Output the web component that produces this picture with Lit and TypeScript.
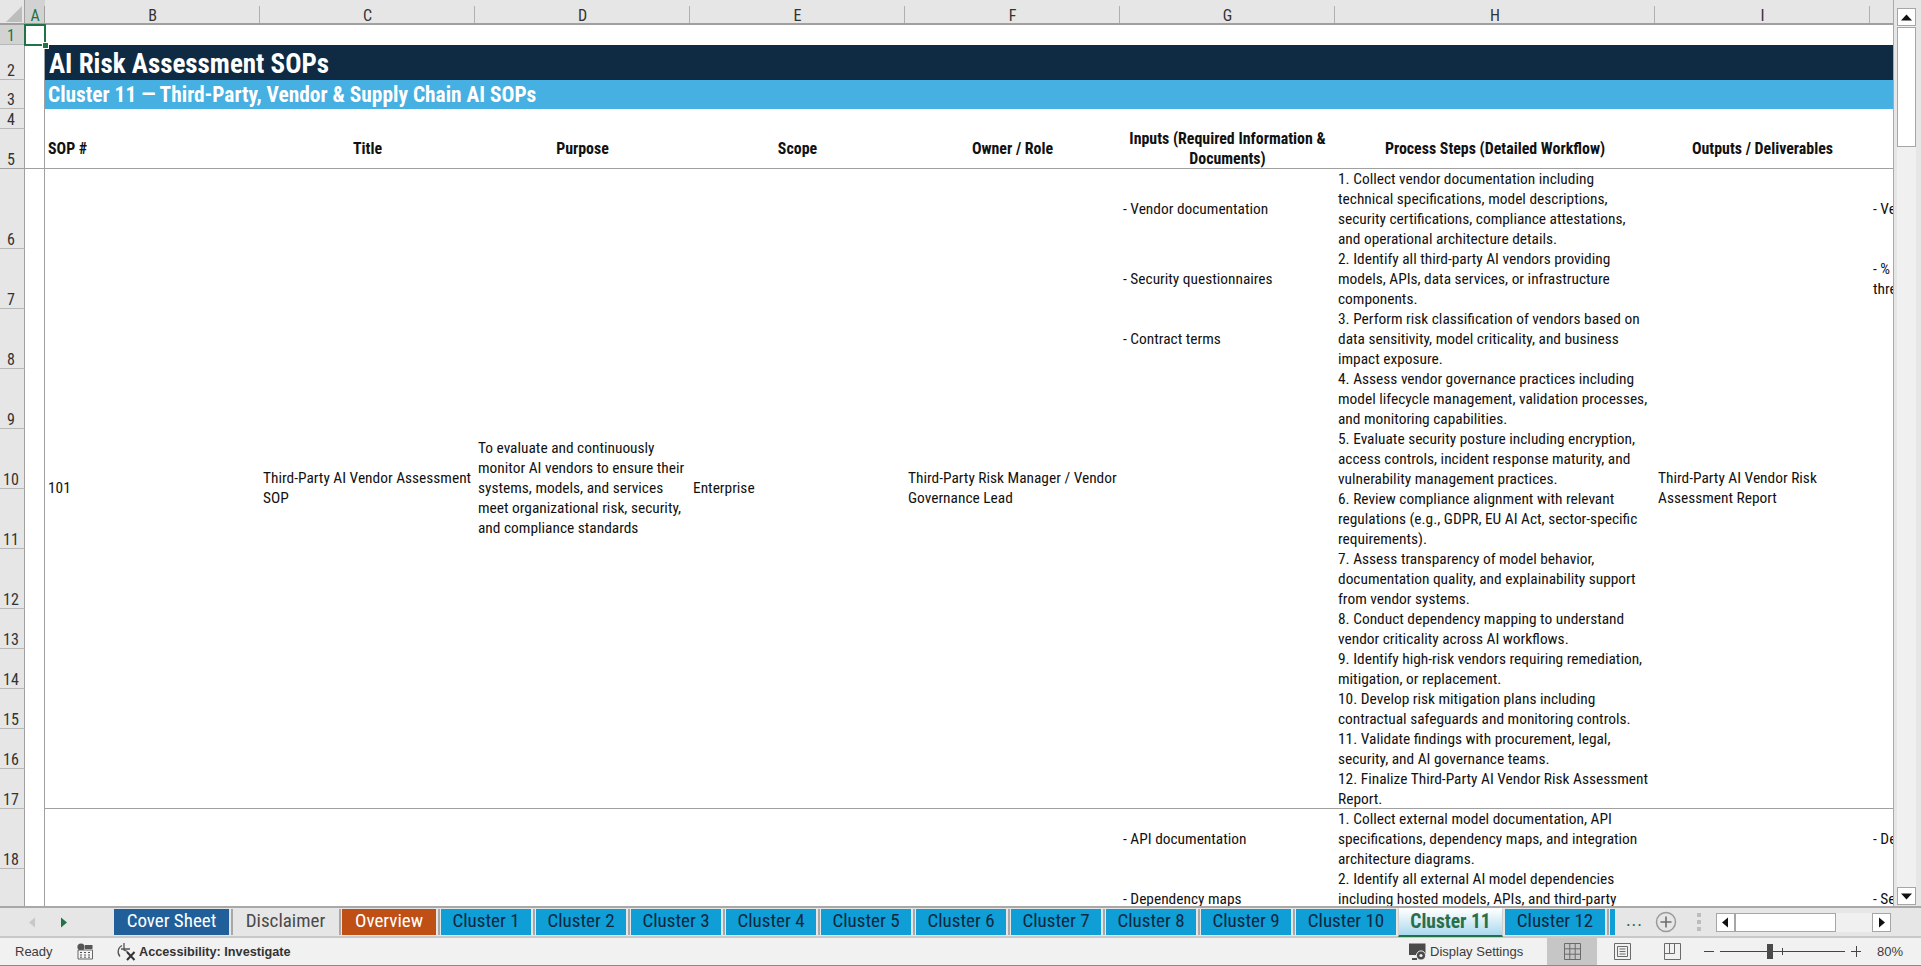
import { LitElement, html, css } from "lit";
import { customElement } from "lit/decorators.js";

const COLS = ["A", "B", "C", "D", "E", "F", "G", "H", "I", "J"];
const COL_W = [20, 215, 215, 215, 215, 215, 215, 320, 215, 215];
const ROW_H = [20, 35, 29, 20, 40, 80, 60, 60, 60, 60, 60, 60, 40, 40, 40, 40, 40, 60, 60];

const STEPS: string[] = [
  "1. Collect vendor documentation including\ntechnical specifications, model descriptions,\nsecurity certifications, compliance attestations,\nand operational architecture details.",
  "2. Identify all third-party AI vendors providing\nmodels, APIs, data services, or infrastructure\ncomponents.",
  "3. Perform risk classification of vendors based on\ndata sensitivity, model criticality, and business\nimpact exposure.",
  "4. Assess vendor governance practices including\nmodel lifecycle management, validation processes,\nand monitoring capabilities.",
  "5. Evaluate security posture including encryption,\naccess controls, incident response maturity, and\nvulnerability management practices.",
  "6. Review compliance alignment with relevant\nregulations (e.g., GDPR, EU AI Act, sector-specific\nrequirements).",
  "7. Assess transparency of model behavior,\ndocumentation quality, and explainability support\nfrom vendor systems.",
  "8. Conduct dependency mapping to understand\nvendor criticality across AI workflows.",
  "9. Identify high-risk vendors requiring remediation,\nmitigation, or replacement.",
  "10. Develop risk mitigation plans including\ncontractual safeguards and monitoring controls.",
  "11. Validate findings with procurement, legal,\nsecurity, and AI governance teams.",
  "12. Finalize Third-Party AI Vendor Risk Assessment\nReport.",
  "1. Collect external model documentation, API\nspecifications, dependency maps, and integration\narchitecture diagrams.",
  "2. Identify all external AI model dependencies\nincluding hosted models, APIs, and third-party\nservices.",
];
const INPUTS: Record<number, string> = {
  6: "- Vendor documentation",
  7: "- Security questionnaires",
  8: "- Contract terms",
  18: "- API documentation",
  19: "- Dependency maps",
};
const OUTS: Record<number, string> = {
  6: "- Vendor risk score",
  7: "- % of vendors above risk\nthreshold",
  18: "- Dependency register",
  19: "- Service risk summary",
};
const HEADS = [
  { c: 2, t: "SOP #", left: true },
  { c: 3, t: "Title" },
  { c: 4, t: "Purpose" },
  { c: 5, t: "Scope" },
  { c: 6, t: "Owner / Role" },
  { c: 7, t: "Inputs (Required Information &\nDocuments)" },
  { c: 8, t: "Process Steps (Detailed Workflow)" },
  { c: 9, t: "Outputs / Deliverables" },
  { c: 10, t: "" },
];
const MERGED = [
  { c: 2, t: "101" },
  { c: 3, t: "Third-Party AI Vendor Assessment\nSOP" },
  { c: 4, t: "To evaluate and continuously\nmonitor AI vendors to ensure their\nsystems, models, and services\nmeet organizational risk, security,\nand compliance standards" },
  { c: 5, t: "Enterprise" },
  { c: 6, t: "Third-Party Risk Manager / Vendor\nGovernance Lead" },
  { c: 9, t: "Third-Party AI Vendor Risk\nAssessment Report" },
];
const TABS = [
  { t: "Cover Sheet", w: 115, k: "navy" },
  { t: "Disclaimer", w: 103, k: "plain" },
  { t: "Overview", w: 94, k: "rust" },
  ...[1, 2, 3, 4, 5, 6, 7, 8, 9].map((n) => ({ t: `Cluster ${n}`, w: 90, k: "blue" })),
  { t: "Cluster 10", w: 100, k: "blue" },
  { t: "Cluster 11", w: 105, k: "active" },
  { t: "Cluster 12", w: 100, k: "blue" },
  { t: "", w: 5, k: "blue" },
];

const place = (col: number, row: number, span = 1) =>
  `grid-column:${col};grid-row:${row} / span ${span}`;

@customElement("app-root")
export class AppRoot extends LitElement {
  static styles = css`
    :host {
      display: block;
      width: 1921px;
      height: 966px;
      overflow: hidden;
      background: #e6e6e6;
      font-family: "Roboto Condensed", "Roboto", sans-serif;
      font-stretch: 75%;
      color: #111;
    }
    .app { display: flex; flex-direction: column; height: 966px; }
    .top { display: flex; height: 906px; flex: none; }
    .sheet {
      position: relative;
      width: 1894px;
      flex: none;
      box-sizing: border-box;
      overflow: hidden;
      background: #fff;
      border-right: 1px solid #a9a9a9;
      display: grid;
      align-content: start;
      justify-content: start;
      font-size: 15.4px;
      line-height: 20px;
    }
    .corner { background: #e6e6e6; border-right: 1px solid #a0a0a0; border-bottom: 2px solid #a0a0a0; box-sizing: border-box; display: flex; align-items: center; justify-content: center; }
    .col {
      background: #e6e6e6;
      box-sizing: border-box;
      border-bottom: 2px solid #a0a0a0;
      font-size: 16px;
      line-height: 16px;
      color: #333;
      display: flex;
      align-items: flex-start;
      justify-content: center;
      position: relative;
      padding-top: 8px;
    }
    .col::after { content: ""; position: absolute; right: 0; top: 6px; bottom: 0; width: 1px; background: #b0b0b0; }
    .col.sel { background: #d2d2d2; color: #217346; }
    .col.sel::after { background: #a0a0a0; top: 6px; }
    .rowh {
      background: #e6e6e6;
      box-sizing: border-box;
      border-right: 1px solid #a0a0a0;
      border-bottom: 1px solid #b8b8b8;
      font-size: 16px;
      line-height: 16px;
      color: #333;
      display: flex;
      align-items: flex-end;
      justify-content: center;
      padding-right: 2px;
    }
    .rowh.sel { background: #d2d2d2; color: #217346; }
    .rowh.rule { border-bottom: 1px solid #a0a0a0; }
    .acol { box-sizing: border-box; border-right: 1px solid #a0a0a0; }
    .acol.rule { border-bottom: 1px solid #a0a0a0; }
    .banner { display: flex; align-items: center; padding-left: 4px; color: #fff; font-weight: 700; white-space: nowrap; }
    .banner.title { background: #0f2a43; font-size: 27px; padding-top: 3px; box-sizing: border-box; }
    .banner.sub { background: #45b0e1; font-size: 21.4px; padding-left: 3px; }
    .cell {
      box-sizing: border-box;
      padding: 0 3px;
      display: flex;
      align-items: center;
      white-space: pre;
      overflow: hidden;
    }
    .cell.rule { border-bottom: 1px solid #a0a0a0; }
    .cell.merged { padding-bottom: 2px; }
    .cell.head { font-weight: 700; font-size: 15.9px; justify-content: center; text-align: center; }
    .cell.head.left { justify-content: flex-start; text-align: left; }
    .selbox {
      position: absolute;
      left: 24px;
      top: 24px;
      width: 22px;
      height: 22px;
      box-sizing: border-box;
      border: 2px solid #217346;
    }
    .selbox::after {
      content: "";
      position: absolute;
      right: -4px;
      bottom: -4px;
      width: 5px;
      height: 5px;
      background: #217346;
      outline: 1px solid #fff;
    }
    .vscroll {
      flex: 1;
      background: #e6e6e6;
      display: flex;
      flex-direction: column;
      align-items: flex-start;
      padding: 8px 0 1px 3px;
      box-sizing: border-box;
    }
    .vtrack { width: 19px; flex: 1; background: #f0f0f0; display: flex; flex-direction: column; }
    .sbtn {
      width: 19px;
      height: 18px;
      flex: none;
      box-sizing: border-box;
      background: #fff;
      border: 1px solid #a6a6a6;
      display: flex;
      align-items: center;
      justify-content: center;
    }
    .vthumb { width: 19px; height: 120px; margin-top: 1px; box-sizing: border-box; background: #fff; border: 1px solid #a6a6a6; }
    .tabbar {
      height: 32px;
      flex: none;
      box-sizing: border-box;
      border-top: 2px solid #a8a8a8;
      border-bottom: 2px solid #c8c8c8;
      background: #e6e6e6;
      display: flex;
      align-items: flex-start;
      position: relative;
    }
    .nav { width: 114px; flex: none; height: 28px; display: flex; align-items: center; padding-left: 28px; box-sizing: border-box; gap: 22px; }
    .tabs { display: flex; width: 1503px; flex: none; padding-top: 1px; overflow: hidden; height: 30px; box-sizing: border-box; }
    .tab {
      height: 26px;
      flex: none;
      margin-right: 5px;
      padding-bottom: 2px;
      display: flex;
      align-items: center;
      justify-content: center;
      font-size: 19px;
      line-height: 20px;
      position: relative;
      box-sizing: border-box;
      white-space: nowrap;
    }
    .tab::after { content: ""; position: absolute; top: 0; right: -3.5px; width: 1.5px; height: 26px; background: #a8a8a8; }
    .tab.navy { background: #215f9a; color: #fff; }
    .tab.plain { color: #4a4a4a; }
    .tab.rust { background: #c04f15; color: #fff; }
    .tab.blue { background: #0f9ed5; color: #0e2841; }
    .tab.active {
      height: 29px;
      margin: -1px 2px 0 -3px;
      padding-bottom: 1px;
      background: linear-gradient(#ffffff, #a9d9ee);
      color: #2a6e4a;
      font-weight: 700;
      font-size: 19.5px;
      border: 1px solid #d0d0d0;
      border-top-color: #fff;
      border-bottom: 2px solid #217346;
      z-index: 1;
    }
    .tab.active::after { display: none; }
    .tab:last-child::after { display: none; }
    .more { width: 31px; flex: none; text-align: center; color: #217346; font-size: 18px; line-height: 24px; letter-spacing: 1px; margin-left: 2px; margin-right: 5px; }
    .plus { flex: none; width: 22px; height: 28px; display: flex; align-items: center; }
    .dots { flex: none; width: 4px; margin-left: 20px; height: 28px; display: flex; flex-direction: column; justify-content: center; gap: 3px; }
    .dots i { display: block; width: 4px; height: 4px; background: #bdbdbd; }
    .hscroll { position: absolute; left: 1716px; top: 5px; width: 175px; height: 19px; background: #f0f0f0; display: flex; }
    .hbtn { width: 19px; height: 19px; flex: none; box-sizing: border-box; background: #fff; border: 1px solid #a6a6a6; display: flex; align-items: center; justify-content: center; }
    .hthumb { width: 101px; height: 19px; flex: none; box-sizing: border-box; background: #fff; border: 1px solid #a6a6a6; }
    .hgap { flex: 1; }
    .status {
      flex: 1;
      background: #f1f1f1;
      border-bottom: 1px solid #8a8a8a;
      box-sizing: border-box;
      display: flex;
      align-items: center;
      font-family: "Liberation Sans", sans-serif;
      font-stretch: normal;
      font-size: 13px;
      color: #3c3c3c;
      white-space: nowrap;
    }
    .ready { margin-left: 15px; width: 62px; flex: none; }
    .st-ico { flex: none; display: block; }
    .acc-ico { margin-left: 23px; }
    .acc { font-weight: 700; font-size: 12.7px; margin-left: 3px; color: #333; }
    .spacer { flex: 1; }
    .disp { margin-left: 3px; width: 117px; flex: none; }
    .view { width: 50px; align-self: stretch; display: flex; align-items: center; justify-content: center; flex: none; }
    .view.on { background: #c6c6c6; }
    .zoom { flex: none; width: 157px; margin-left: 7px; position: relative; height: 100%; }
    .zline { position: absolute; left: 16px; top: 13px; width: 125px; height: 1px; background: #444; }
    .ztick { position: absolute; left: 78px; top: 10px; width: 1px; height: 7px; background: #444; }
    .zthumb { position: absolute; left: 63px; top: 6px; width: 6px; height: 15px; background: #4a4a4a; }
    .zm { position: absolute; left: 0; top: 13px; width: 10px; height: 1px; background: #444; }
    .zp { position: absolute; left: 147px; top: 13px; width: 10px; height: 1px; background: #444; }
    .zp::after { content: ""; position: absolute; left: 5px; top: -5px; width: 1px; height: 11px; background: #444; }
    .pct { margin-left: 16px; margin-right: 14px; width: 30px; flex: none; }
  `;

  private sheet() {
    const out: unknown[] = [];
    out.push(html`<div class="corner" style=${place(1, 1)}>
      <svg width="22" height="22" viewBox="0 0 22 22"><path d="M21 5V21H5Z" fill="#bdbdbd"/></svg>
    </div>`);
    COLS.forEach((c, i) => out.push(html`<div class="col ${i === 0 ? "sel" : ""}" style=${place(i + 2, 1)}>${c}</div>`));
    ROW_H.forEach((_, i) => {
      const n = i + 1;
      const rule = n === 5 ? "rule" : "";
      out.push(html`<div class="rowh ${n === 1 ? "sel" : ""} ${rule}" style=${place(1, n + 1)}>${n}</div>`);
      out.push(html`<div class="acol ${rule}" style=${place(2, n + 1)}></div>`);
    });
    out.push(html`<div class="banner title" style="grid-column:3 / 12;grid-row:3">AI Risk Assessment SOPs</div>`);
    out.push(html`<div class="banner sub" style="grid-column:3 / 12;grid-row:4">Cluster 11 — Third-Party, Vendor &amp; Supply Chain AI SOPs</div>`);
    HEADS.forEach((h) =>
      out.push(html`<div class="cell head rule ${h.left ? "left" : ""}" style=${place(h.c + 1, 6)}>${h.t}</div>`)
    );
    MERGED.forEach((m) => out.push(html`<div class="cell merged rule" style=${place(m.c + 1, 7, 12)}>${m.t}</div>`));
    for (let n = 6; n <= 19; n++) {
      const rule = n === 17 ? "rule" : "";
      out.push(html`<div class="cell ${rule}" style=${place(8, n + 1)}>${INPUTS[n] ?? ""}</div>`);
      out.push(html`<div class="cell ${rule}" style=${place(9, n + 1)}>${STEPS[n - 6]}</div>`);
      out.push(html`<div class="cell ${rule}" style=${place(11, n + 1)}>${OUTS[n] ?? ""}</div>`);
    }
    return out;
  }

  render() {
    const cols = `25px ${COL_W.map((w) => w + "px").join(" ")}`;
    const rows = `25px ${ROW_H.map((h) => h + "px").join(" ")}`;
    const tri = (d: string, f = "#111") => html`<svg width="9" height="11" viewBox="0 0 9 11"><path d=${d} fill=${f}/></svg>`;
    return html`<div class="app">
      <div class="top">
        <div class="sheet" style="grid-template-columns:${cols};grid-template-rows:${rows}">
          ${this.sheet()}
          <div class="selbox"></div>
        </div>
        <div class="vscroll">
          <div class="sbtn"><svg width="11" height="7" viewBox="0 0 11 7"><path d="M5.5 0.5L11 6.5H0Z" fill="#111"/></svg></div>
          <div class="vtrack"><div class="vthumb"></div></div>
          <div class="sbtn"><svg width="11" height="7" viewBox="0 0 11 7"><path d="M5.5 6.5L11 0.5H0Z" fill="#111"/></svg></div>
        </div>
      </div>
      <div class="tabbar">
        <div class="nav">
          ${tri("M7 0.5V10.5L1 5.5Z", "#c8c8c8")}
          ${tri("M2 0.5V10.5L8 5.5Z", "#217346")}
        </div>
        <div class="tabs">
          ${TABS.map((t) => html`<div class="tab ${t.k}" style="width:${t.w}px">${t.t}</div>`)}
        </div>
        <div class="more">...</div>
        <div class="plus">
          <svg width="22" height="22" viewBox="0 0 22 22">
            <circle cx="11" cy="11" r="9.5" fill="none" stroke="#9a9a9a" stroke-width="1.5"/>
            <path d="M11 5.5V16.5M5.5 11H16.5" stroke="#6e6e6e" stroke-width="1.6"/>
          </svg>
        </div>
        <div class="dots"><i></i><i></i><i></i></div>
        <div class="hscroll">
          <div class="hbtn">${tri("M7 0.5V10.5L1 5.5Z")}</div>
          <div class="hthumb"></div>
          <div class="hgap"></div>
          <div class="hbtn">${tri("M2 0.5V10.5L8 5.5Z")}</div>
        </div>
      </div>
      <div class="status">
        <span class="ready">Ready</span>
        <svg class="st-ico" width="16" height="17" viewBox="0 0 16 17">
          <circle cx="4" cy="4" r="3.6" fill="#555"/>
          <path d="M8 2H15.5V6H8Z" fill="#555"/>
          <path d="M1 7H15.5V16H1Z" fill="#f4f4f4" stroke="#666"/>
          <path d="M3 9.5H5M7 9.5H9M11 9.5H13M3 12H5M7 12H9M11 12H13M3 14.2H5M7 14.2H9M11 14.2H13" stroke="#555"/>
        </svg>
        <svg class="st-ico acc-ico" width="20" height="19" viewBox="0 0 20 19" fill="none" stroke="#555" stroke-width="1.3">
          <path d="M6 3.5A7 7 0 0 0 4 14.5"/>
          <path d="M8 1V8L11.5 9.5M5 7H14"/>
          <path d="M11 10L18.5 18M18.5 10L11 18" stroke="#333" stroke-width="2"/>
        </svg>
        <span class="acc">Accessibility: Investigate</span>
        <div class="spacer"></div>
        <svg class="st-ico" width="19" height="18" viewBox="0 0 19 18">
          <path d="M1 0.5H17.5V12H1Z" fill="#4a4a4a"/>
          <path d="M4 16H9" stroke="#4a4a4a" stroke-width="2"/>
          <circle cx="13" cy="12.5" r="4.6" fill="#4a4a4a" stroke="#f1f1f1" stroke-width="1"/>
          <circle cx="13" cy="12.5" r="1.6" fill="#f1f1f1"/>
        </svg>
        <span class="disp">Display Settings</span>
        <div class="view on">
          <svg width="17" height="17" viewBox="0 0 17 17" fill="none" stroke="#6a6a6a"><path d="M0.5 0.5H16.5V16.5H0.5ZM0.5 5.8H16.5M0.5 11.2H16.5M5.8 0.5V16.5M11.2 0.5V16.5"/></svg>
        </div>
        <div class="view">
          <svg width="17" height="17" viewBox="0 0 17 17" fill="none" stroke="#6a6a6a"><path d="M0.5 0.5H16.5V16.5H0.5ZM3.5 3.5H13.5V13.5H3.5ZM5.5 6H11.5M5.5 8.5H11.5M5.5 11H11.5"/></svg>
        </div>
        <div class="view">
          <svg width="17" height="17" viewBox="0 0 17 17" fill="none" stroke="#6a6a6a"><path d="M0.5 0.5H16.5V16.5H0.5ZM0.5 10.5H10.5V0.5M5.5 0.5V10.5"/></svg>
        </div>
        <div class="zoom">
          <div class="zm"></div><div class="zline"></div><div class="ztick"></div><div class="zthumb"></div><div class="zp"></div>
        </div>
        <span class="pct">80%</span>
      </div>
    </div>`;
  }
}
